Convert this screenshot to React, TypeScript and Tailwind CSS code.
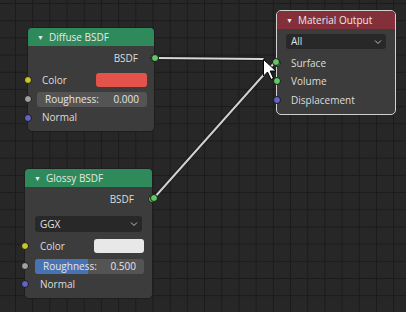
import type { ReactNode } from 'react';

type SocketKind = 'color' | 'float' | 'vector' | 'shader';

const socketColor: Record<SocketKind, string> = {
  color: 'bg-[#c7c729]',
  float: 'bg-[#a1a1a1]',
  vector: 'bg-[#6363c7]',
  shader: 'bg-[#63c763]',
};

function Socket({ kind, side }: { kind: SocketKind; side: 'left' | 'right' }) {
  return (
    <span
      className={`absolute top-1/2 size-[8px] -translate-y-1/2 rounded-full border border-[#1a1a1a] ${socketColor[kind]} ${
        side === 'left' ? 'left-[-4px]' : 'right-[-4px]'
      }`}
    />
  );
}

function Header({ title, color }: { title: string; color: string }) {
  return (
    <div className={`flex h-[18px] items-center gap-[5px] rounded-t-[4px] pl-[9px] text-[10px] text-[#e8e8e8] ${color}`}>
      <span className="text-[7px] leading-none">▼</span>
      <span>{title}</span>
    </div>
  );
}

function Row({ children, className = '' }: { children: ReactNode; className?: string }) {
  return <div className={`relative flex h-[18px] items-center ${className}`}>{children}</div>;
}

function Dropdown({ label, className = '' }: { label: string; className?: string }) {
  return (
    <div className={`flex items-center justify-between rounded-[3px] bg-[#282828] pl-[5px] pr-[4px] text-[10px] text-[#e0e0e0] ${className}`}>
      <span>{label}</span>
      <svg width="8" height="6" viewBox="0 0 8 6">
        <path d="M1 1.5 L4 4.5 L7 1.5" fill="none" stroke="#bdbdbd" strokeWidth="1" />
      </svg>
    </div>
  );
}

function Slider({ value, fill }: { value: string; fill: number }) {
  return (
    <div className="relative flex h-[15px] flex-1 items-center justify-between overflow-hidden rounded-[3px] bg-[#545454] px-[8px] text-[10px] text-[#e6e6e6]">
      <div className="absolute inset-y-0 left-0 bg-[#4772b3]" style={{ width: `${fill * 100}%` }} />
      <span className="relative">Roughness:</span>
      <span className="relative">{value}</span>
    </div>
  );
}

export default function App() {
  return (
    <div
      className="relative h-[312px] w-[406px] overflow-hidden bg-[#272727] bg-[linear-gradient(to_right,#1b1b1b_1px,transparent_1px),linear-gradient(to_bottom,#1b1b1b_1px,transparent_1px)] bg-size-[17.2px_17.2px] bg-position-[15px_3px] text-[10px] text-[#dddddd]"
      style={{ fontFamily: '"Open Sans", "Noto Sans", sans-serif' }}
    >
      {/* Diffuse BSDF */}
      <div className="absolute left-[27px] top-[27px] w-[128px] rounded-[5px] border border-[#1e1e1e] bg-[#3c3c3c] pb-[4px]">
        <Header title="Diffuse BSDF" color="bg-[#2f8a5b]" />
        <Row className="mt-[3px] justify-end pr-[16px]">
          BSDF
          <Socket kind="shader" side="right" />
        </Row>
        <Row className="mt-[4px] justify-between pl-[14px] pr-[7px]">
          <Socket kind="color" side="left" />
          <span>Color</span>
          <span className="h-[14px] w-[51px] rounded-[3px] bg-[#e4534b]" />
        </Row>
        <Row className="mt-[1px] pl-[9px] pr-[7px]">
          <Socket kind="float" side="left" />
          <div className="flex h-[15px] flex-1 items-center justify-between rounded-[3px] bg-[#545454] px-[8px] text-[#e6e6e6]">
            <span>Roughness:</span>
            <span>0.000</span>
          </div>
        </Row>
        <Row className="h-[19px] pl-[14px]">
          <Socket kind="vector" side="left" />
          Normal
        </Row>
      </div>

      {/* Material Output */}
      <div className="absolute left-[276px] top-[10px] w-[120px] rounded-[5px] border border-[#d0d0d0] bg-[#3c3c3c] pb-[5px]">
        <Header title="Material Output" color="bg-[#83303a]" />
        <Dropdown label="All" className="mx-[9px] mt-[5px] h-[15px]" />
        <Row className="mt-[5px] pl-[14px]">
          <Socket kind="shader" side="left" />
          Surface
        </Row>
        <Row className="pl-[14px]">
          <Socket kind="shader" side="left" />
          Volume
        </Row>
        <Row className="mt-[1px] pl-[14px]">
          <Socket kind="vector" side="left" />
          Displacement
        </Row>
      </div>

      {/* Glossy BSDF */}
      <div className="absolute left-[24px] top-[168px] w-[129px] rounded-[5px] border border-[#1e1e1e] bg-[#3c3c3c] pb-[5px]">
        <Header title="Glossy BSDF" color="bg-[#2f8a5b]" />
        <Row className="mt-[3px] justify-end pr-[18px]">
          BSDF
          <Socket kind="shader" side="right" />
        </Row>
        <Dropdown label="GGX" className="mx-[10px] mt-[8px] h-[16px]" />
        <Row className="mt-[5px] justify-between pl-[15px] pr-[8px]">
          <Socket kind="color" side="left" />
          <span>Color</span>
          <span className="h-[14px] w-[50px] rounded-[3px] bg-[#e8e8e8]" />
        </Row>
        <Row className="mt-[2px] h-[17px] pl-[10px] pr-[8px]">
          <Socket kind="float" side="left" />
          <Slider value="0.500" fill={0.49} />
        </Row>
        <Row className="pl-[15px]">
          <Socket kind="vector" side="left" />
          Normal
        </Row>
      </div>

      {/* links + cursor */}
      <svg className="pointer-events-none absolute inset-0" width="406" height="312" viewBox="0 0 406 312">
        <g strokeLinecap="round">
          <line x1="155" y1="58" x2="263" y2="59" stroke="#1a1a1a" strokeWidth="4" />
          <line x1="155" y1="58" x2="263" y2="59" stroke="#d8d8d8" strokeWidth="2" />
          <line x1="154" y1="198" x2="276" y2="61" stroke="#1a1a1a" strokeWidth="4" />
          <line x1="154" y1="198" x2="276" y2="61" stroke="#d0d0d0" strokeWidth="2" />
        </g>
        <circle cx="155" cy="58" r="3.5" fill="#63c763" stroke="#1a1a1a" strokeWidth="1" />
        <circle cx="154" cy="198" r="3.5" fill="#63c763" stroke="#1a1a1a" strokeWidth="1" />
        <circle cx="276" cy="62" r="3.5" fill="#63c763" stroke="#1a1a1a" strokeWidth="1" />
        <path
          d="M263.5 59.5 L263.5 76 L267.5 72 L271 79.5 L273.5 78.3 L270.2 71 L276 71 Z"
          fill="#ffffff"
          stroke="#000000"
          strokeWidth="1"
          strokeLinejoin="round"
        />
      </svg>
    </div>
  );
}
